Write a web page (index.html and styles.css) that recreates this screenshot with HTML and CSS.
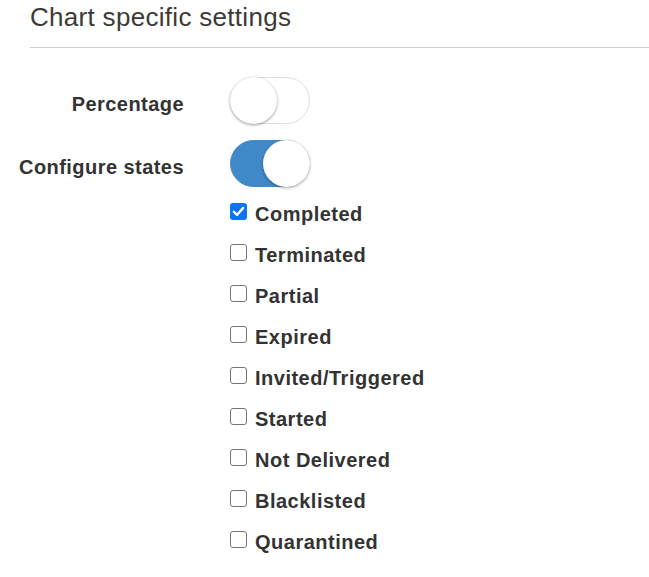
FILE: index.html
```html
<!DOCTYPE html>
<html>
<head>
<meta charset="utf-8">
<link rel="stylesheet" href="styles.css">
</head>
<body>
<div class="panel">
  <div class="legend">Chart specific settings</div>
  <div class="form">
    <div class="row row-toggle">
      <div class="label">Percentage</div>
      <div class="control"><span class="switch"><span class="knob"></span></span></div>
    </div>
    <div class="row row-toggle">
      <div class="label">Configure states</div>
      <div class="control"><span class="switch on"><span class="knob"></span></span></div>
    </div>
    <div class="row">
      <div class="label"></div>
      <div class="control checks">
        <label class="check"><span class="box checked"><svg width="16" height="16" viewBox="0 0 16 16"><path d="M3.6 8.2 L6.6 11.2 L12.4 4.6" fill="none" stroke="#fff" stroke-width="2.2" stroke-linecap="round" stroke-linejoin="round"/></svg></span><span>Completed</span></label>
        <label class="check"><span class="box"></span><span>Terminated</span></label>
        <label class="check"><span class="box"></span><span>Partial</span></label>
        <label class="check"><span class="box"></span><span>Expired</span></label>
        <label class="check"><span class="box"></span><span>Invited/Triggered</span></label>
        <label class="check"><span class="box"></span><span>Started</span></label>
        <label class="check"><span class="box"></span><span>Not Delivered</span></label>
        <label class="check"><span class="box"></span><span>Blacklisted</span></label>
        <label class="check"><span class="box"></span><span>Quarantined</span></label>
      </div>
    </div>
  </div>
</div>
</body>
</html>
```
FILE: styles.css
```css
html, body {
  margin: 0;
  padding: 0;
  background: #fff;
}
body {
  font-family: "Liberation Sans", Arial, Helvetica, sans-serif;
  color: #333;
  overflow: hidden;
}
.panel {
  padding-left: 30px;
}
.legend {
  font-size: 26px;
  letter-spacing: 0.3px;
  color: #3d3a36;
  line-height: 34px;
  height: 47px;
  border-bottom: 1px solid #cfcfcf;
}
.form {
  margin-left: -30px;
  padding-top: 29px;
}
.row {
  display: grid;
  grid-template-columns: 183px 1fr;
  column-gap: 47px;
}
.row-toggle {
  align-items: center;
  margin-bottom: 16px;
}
.label {
  text-align: right;
  font-weight: bold;
  font-size: 20px;
  letter-spacing: 0.45px;
  padding-top: 7px;
  margin-right: -1px;
}
.switch {
  display: block;
  position: relative;
  width: 78px;
  height: 45px;
  border: 1px solid #dfdfdf;
  border-radius: 24px;
  background: #fff;
}
.switch .knob {
  position: absolute;
  left: -1px;
  top: -1px;
  width: 47px;
  height: 47px;
  border-radius: 50%;
  background: #fff;
  box-shadow: 0 1px 3px rgba(0,0,0,0.4);
}
.switch.on {
  background: #3f89c9;
  border-color: #3f89c9;
}
.switch.on .knob {
  left: auto;
  right: -1px;
  box-shadow: 0 1px 3px rgba(0,0,0,0.35);
}
.checks {
  display: flex;
  flex-direction: column;
  margin-top: -9px;
}
.check {
  display: flex;
  align-items: center;
  height: 41px;
  font-weight: bold;
  font-size: 20px;
  letter-spacing: 0.5px;
  color: #333;
}
.box {
  display: block;
  box-sizing: border-box;
  width: 17px;
  height: 17px;
  margin: 0 8px 0 0;
  border: 1px solid #767676;
  border-radius: 3px;
  background: #fff;
  position: relative;
  top: -3px;
}
.box.checked {
  background: #0b75f5;
  border: none;
}
.box svg {
  display: block;
  width: 17px;
  height: 17px;
}
```
